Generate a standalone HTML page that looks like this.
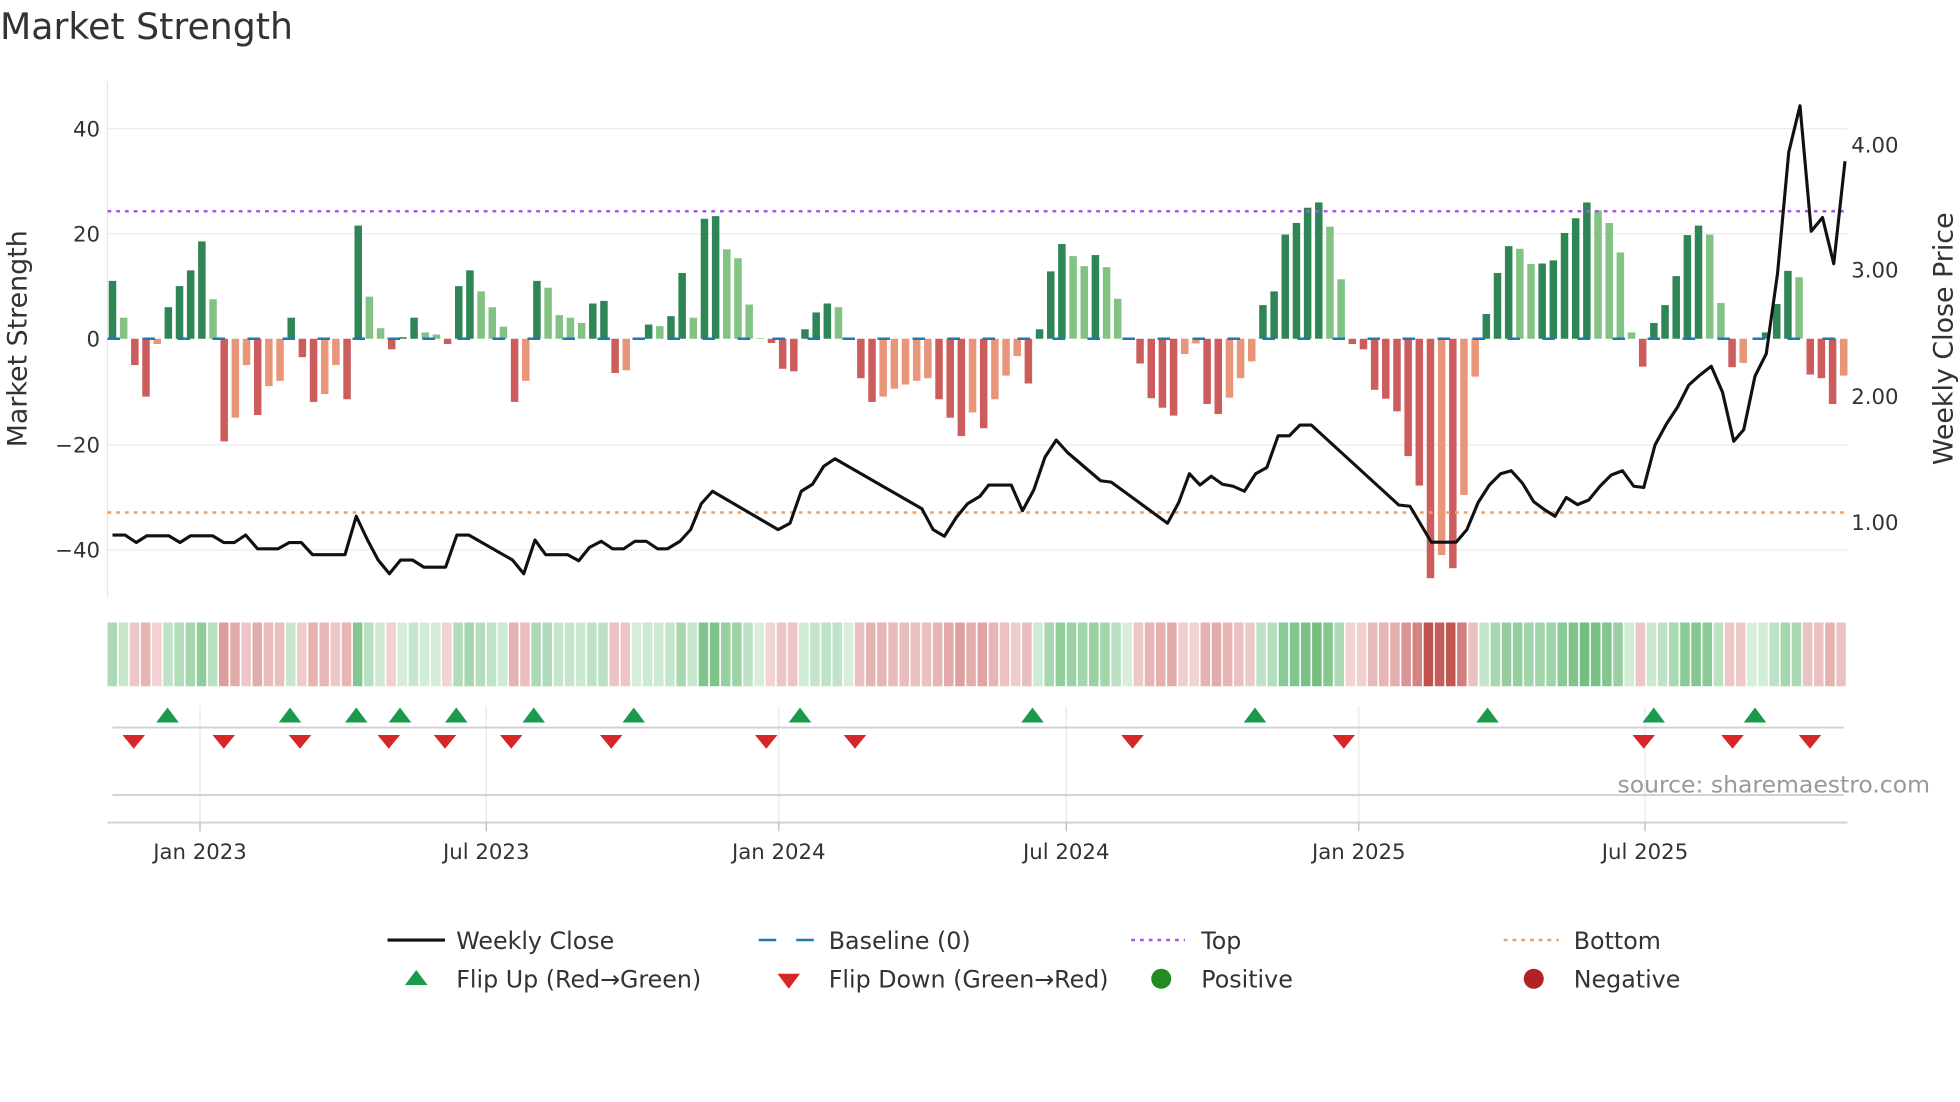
<!DOCTYPE html>
<html><head><meta charset="utf-8"><style>
html,body{margin:0;padding:0;background:#fff;}
svg{display:block;font-family:"DejaVu Sans","Liberation Sans",sans-serif;}
</style></head><body>
<svg id="s" width="1960" height="1102" viewBox="0 0 1568 881.6" xmlns="http://www.w3.org/2000/svg">
<text x="0" y="31" font-size="29" fill="#333">Market Strength</text>
<g stroke="#ececec" stroke-width="1">
<line x1="86" x2="1478" y1="103" y2="103"/><line x1="86" x2="1478" y1="187" y2="187"/>
<line x1="86" x2="1478" y1="356" y2="356"/><line x1="86" x2="1478" y1="440" y2="440"/>
</g>
<line x1="86" x2="86" y1="65" y2="478" stroke="#e6e6e6"/>
<g font-size="17" fill="#333" text-anchor="end">
<text x="80" y="109">40</text><text x="80" y="193">20</text><text x="80" y="277">0</text>
<text x="80" y="362">−20</text><text x="80" y="446">−40</text>
</g>
<g font-size="17" fill="#333">
<text x="1481" y="122">4.00</text><text x="1481" y="222">3.00</text><text x="1481" y="323">2.00</text><text x="1481" y="424">1.00</text>
</g>
<text transform="translate(21,271) rotate(-90)" font-size="21.5" fill="#333" text-anchor="middle">Market Strength</text>
<text transform="translate(1562,271) rotate(-90)" font-size="21.5" fill="#333" text-anchor="middle">Weekly Close Price</text>
<g id="bars"></g>
<line x1="86" x2="1478" y1="169" y2="169" stroke="#a259e6" stroke-width="2" stroke-dasharray="3,4"/>
<line x1="86" x2="1478" y1="410" y2="410" stroke="#f0a060" stroke-width="2" stroke-dasharray="3,4"/>
<g id="heat"></g>
<g stroke="#e8e8e8" stroke-width="1">
<line x1="160" x2="160" y1="565" y2="660"/><line x1="389" x2="389" y1="565" y2="660"/>
<line x1="623" x2="623" y1="565" y2="660"/><line x1="853" x2="853" y1="565" y2="660"/>
<line x1="1087" x2="1087" y1="565" y2="660"/><line x1="1316" x2="1316" y1="565" y2="660"/>
</g>
<line x1="90" x2="1475" y1="582" y2="582" stroke="#d0d0d0" stroke-width="1.5"/>
<line x1="90" x2="1475" y1="636" y2="636" stroke="#d0d0d0" stroke-width="1.5"/>
<line x1="86" x2="1478" y1="658" y2="658" stroke="#cfcfcf" stroke-width="1.5"/>
<g stroke="#bbb" stroke-width="1">
<line x1="160" x2="160" y1="658" y2="665"/><line x1="389" x2="389" y1="658" y2="665"/>
<line x1="623" x2="623" y1="658" y2="665"/><line x1="853" x2="853" y1="658" y2="665"/>
<line x1="1087" x2="1087" y1="658" y2="665"/><line x1="1316" x2="1316" y1="658" y2="665"/>
</g>
<g id="marks"></g>
<text x="1544" y="634" font-size="18.8" fill="#999" text-anchor="end">source: sharemaestro.com</text>
<g font-size="17" fill="#333" text-anchor="middle">
<text x="160" y="687">Jan 2023</text><text x="389" y="687">Jul 2023</text><text x="623" y="687">Jan 2024</text>
<text x="853" y="687">Jul 2024</text><text x="1087" y="687">Jan 2025</text><text x="1316" y="687">Jul 2025</text>
</g>
<g font-size="19" fill="#333">
<line x1="310" x2="356" y1="752" y2="752" stroke="#111" stroke-width="2.5"/>
<text x="365" y="759">Weekly Close</text>
<line x1="607" x2="651" y1="752" y2="752" stroke="#1f77b4" stroke-width="2" stroke-dasharray="14,16"/>
<text x="663" y="759">Baseline (0)</text>
<line x1="905" x2="948" y1="752" y2="752" stroke="#a259e6" stroke-width="2" stroke-dasharray="3,4"/>
<text x="961" y="759">Top</text>
<line x1="1203" x2="1247" y1="752" y2="752" stroke="#f0a060" stroke-width="2" stroke-dasharray="3,4"/>
<text x="1259" y="759">Bottom</text>
<polygon points="324,788 342,788 333,776" fill="#1a9a4a"/>
<text x="365" y="790">Flip Up (Red→Green)</text>
<polygon points="622,779 640,779 631,791" fill="#d62728"/>
<text x="663" y="790">Flip Down (Green→Red)</text>
<circle cx="929" cy="783" r="8" fill="#228b22"/>
<text x="961" y="790">Positive</text>
<circle cx="1227" cy="783" r="8" fill="#b22222"/>
<text x="1259" y="790">Negative</text>
</g>
<polyline id="price" fill="none" stroke="#111" stroke-width="2.5" stroke-linejoin="round"/>
</svg>
<script>
var NS="http://www.w3.org/2000/svg";
var d=[[11,'G'],[4,'L'],[-5,'R'],[-11,'R'],[-1,'S'],[6,'G'],[10,'G'],[13,'G'],[18.5,'G'],[7.5,'L'],
[-19.5,'R'],[-15,'S'],[-5,'S'],[-14.5,'R'],[-9,'S'],[-8,'S'],[4,'G'],[-3.5,'R'],[-12,'R'],[-10.5,'S'],
[-5,'S'],[-11.5,'R'],[21.5,'G'],[8,'L'],[2,'L'],[-2,'R'],[0.3,'G'],[4,'G'],[1.2,'L'],[0.8,'L'],
[-1,'R'],[10,'G'],[13,'G'],[9,'L'],[6,'L'],[2.3,'L'],[-12,'R'],[-8,'S'],[11,'G'],[9.7,'L'],
[4.5,'L'],[4,'L'],[3,'L'],[6.7,'G'],[7.2,'G'],[-6.5,'R'],[-6,'S'],[0,'Z'],[2.7,'G'],[2.4,'L'],
[4.3,'G'],[12.5,'G'],[4,'L'],[22.8,'G'],[23.3,'G'],[17,'L'],[15.3,'L'],[6.5,'L'],[0.1,'L'],[-0.8,'R'],
[-5.7,'R'],[-6.2,'R'],[1.8,'G'],[5,'G'],[6.7,'G'],[6,'L'],[0,'Z'],[-7.5,'R'],[-12,'R'],[-11,'S'],
[-9.5,'S'],[-8.7,'S'],[-8,'S'],[-7.5,'S'],[-11.5,'R'],[-15,'R'],[-18.5,'R'],[-14,'S'],[-17,'R'],[-11.5,'S'],
[-7,'S'],[-3.3,'S'],[-8.5,'R'],[1.8,'G'],[12.8,'G'],[18,'G'],[15.7,'L'],[13.8,'L'],[15.9,'G'],[13.6,'L'],
[7.6,'L'],[0,'Z'],[-4.7,'R'],[-11.3,'R'],[-13.1,'R'],[-14.6,'R'],[-2.9,'S'],[-0.9,'S'],[-12.4,'R'],[-14.3,'R'],
[-11.2,'S'],[-7.5,'S'],[-4.3,'S'],[6.4,'G'],[9,'G'],[19.8,'G'],[22,'G'],[24.9,'G'],[25.9,'G'],[21.3,'L'],
[11.3,'L'],[-1,'R'],[-2,'R'],[-9.7,'R'],[-11.4,'R'],[-13.8,'R'],[-22.3,'R'],[-27.9,'R'],[-45.5,'R'],[-41.1,'S'],
[-43.6,'R'],[-29.7,'S'],[-7.2,'S'],[4.7,'G'],[12.5,'G'],[17.6,'G'],[17.1,'L'],[14.2,'L'],[14.3,'G'],[14.9,'G'],
[20.1,'G'],[22.9,'G'],[25.9,'G'],[24.4,'L'],[22,'L'],[16.4,'L'],[1.2,'L'],[-5.3,'R'],[3,'G'],[6.4,'G'],
[11.9,'G'],[19.7,'G'],[21.5,'G'],[19.8,'L'],[6.8,'L'],[-5.4,'R'],[-4.6,'S'],[0,'Z'],[1.2,'G'],[6.6,'G'],
[12.9,'G'],[11.7,'L'],[-6.8,'R'],[-7.5,'R'],[-12.4,'R'],[-7,'S']];
var col={G:'#2e8555',L:'#82c383',R:'#cd5c5c',S:'#e8957a',Z:'#fff'};
var n=d.length, x0=90, sp=(1475-90)/(n-1);
var bars=document.getElementById('bars'), heat=document.getElementById('heat');
function mix(a,b,t){t=Math.max(0,Math.min(1,t));var r='#';for(var i=0;i<3;i++){var v=Math.round(a[i]+(b[i]-a[i])*t);r+=('0'+v.toString(16)).slice(-2);}return r;}
var cw=(1478-86)/n;
for(var i=0;i<n;i++){
 var v=d[i][0], c=d[i][1], x=x0+i*sp;
 if(c!='Z'){var r=document.createElementNS(NS,'rect');var h=Math.abs(v)*4.21;
 r.setAttribute('x',x-3);r.setAttribute('width',6);r.setAttribute('y',v>=0?271-h:271);r.setAttribute('height',Math.max(h,0.5));r.setAttribute('fill',col[c]);bars.appendChild(r);}
 var hc = v>=0 ? mix([214,238,219],[116,190,128],v/26) : mix([243,214,214],[190,80,76],-v/46);
 var q=document.createElementNS(NS,'rect');q.setAttribute('x',86+i*cw);q.setAttribute('width',cw-1.3);q.setAttribute('y',498);q.setAttribute('height',51);q.setAttribute('fill',hc);heat.appendChild(q);
}
var bl=document.createElementNS(NS,'line');bl.setAttribute('x1',86);bl.setAttribute('x2',1478);bl.setAttribute('y1',271);bl.setAttribute('y2',271);
bl.setAttribute('stroke','#1f77b4');bl.setAttribute('stroke-width','2');bl.setAttribute('stroke-dasharray','10,18');bars.appendChild(bl);
var marks=document.getElementById('marks');
[134,232,285,320,365,427,507,640,826,1004,1190,1323,1404].forEach(function(x){var p=document.createElementNS(NS,'polygon');p.setAttribute('points',(x-9)+',578 '+(x+9)+',578 '+x+',566');p.setAttribute('fill','#1a9a4a');marks.appendChild(p);});
[107,179,240,311,356,409,489,613,684,906,1075,1315,1386,1448].forEach(function(x){var p=document.createElementNS(NS,'polygon');p.setAttribute('points',(x-9)+',588 '+(x+9)+',588 '+x+',599');p.setAttribute('fill','#d62728');marks.appendChild(p);});
var pts="90,428 100,428 109,434 117.5,428.6 135,428.6 144,434 152.5,428.6 170,428.6 179,434 187.5,434 196.5,428 206,439 222.5,439 231.5,434 241,434 250,443.7 276,443.7 285,413 294,432 302.5,448 311.5,459 320.5,448 330,448 339,453.7 356.5,453.7 365.5,428 375,428 410,448 419,459 428,432 436.5,443.7 454,443.7 463,448.6 471.5,438 481,433 490,439 499,439 508,433 517,433 526,439 534,439 544,433 552.5,423.7 561,403 570,393 622.5,423.7 632,418.6 641,393 650,387.4 659,373 668,367 737.5,407 746.5,423.7 755.5,429 765,414 774,403 784,397 791,388 809,388 818,408.6 827,392 836,365.7 845,352 854,362 880.5,384.6 889,385.7 934,418.6 943,402 951.5,379 960,388 969,381 978,387.4 986.5,389 995.5,393 1004.5,379 1013.5,374 1022.5,348.6 1031.5,348.6 1040,340 1049,340 1119,404 1128,405 1137.5,421 1145,433.7 1165,433.7 1173.5,423.7 1182.5,402 1191.5,388 1200.5,379 1209,376.6 1218,386.6 1227,401.4 1236,408 1244,413 1253,398 1262,403.7 1271,400 1280,389 1289,380 1298,376.6 1307,389 1315,390 1324,356 1333,339.4 1342,325.7 1351,308 1360,300 1369,293 1378,313.7 1387,353 1395,343.7 1404,300.9 1413,283 1422,219 1431,121.7 1440,84.6 1449,185 1458,174 1467,211 1476,129";
document.getElementById('price').setAttribute('points',pts);
</script>
</body></html>
